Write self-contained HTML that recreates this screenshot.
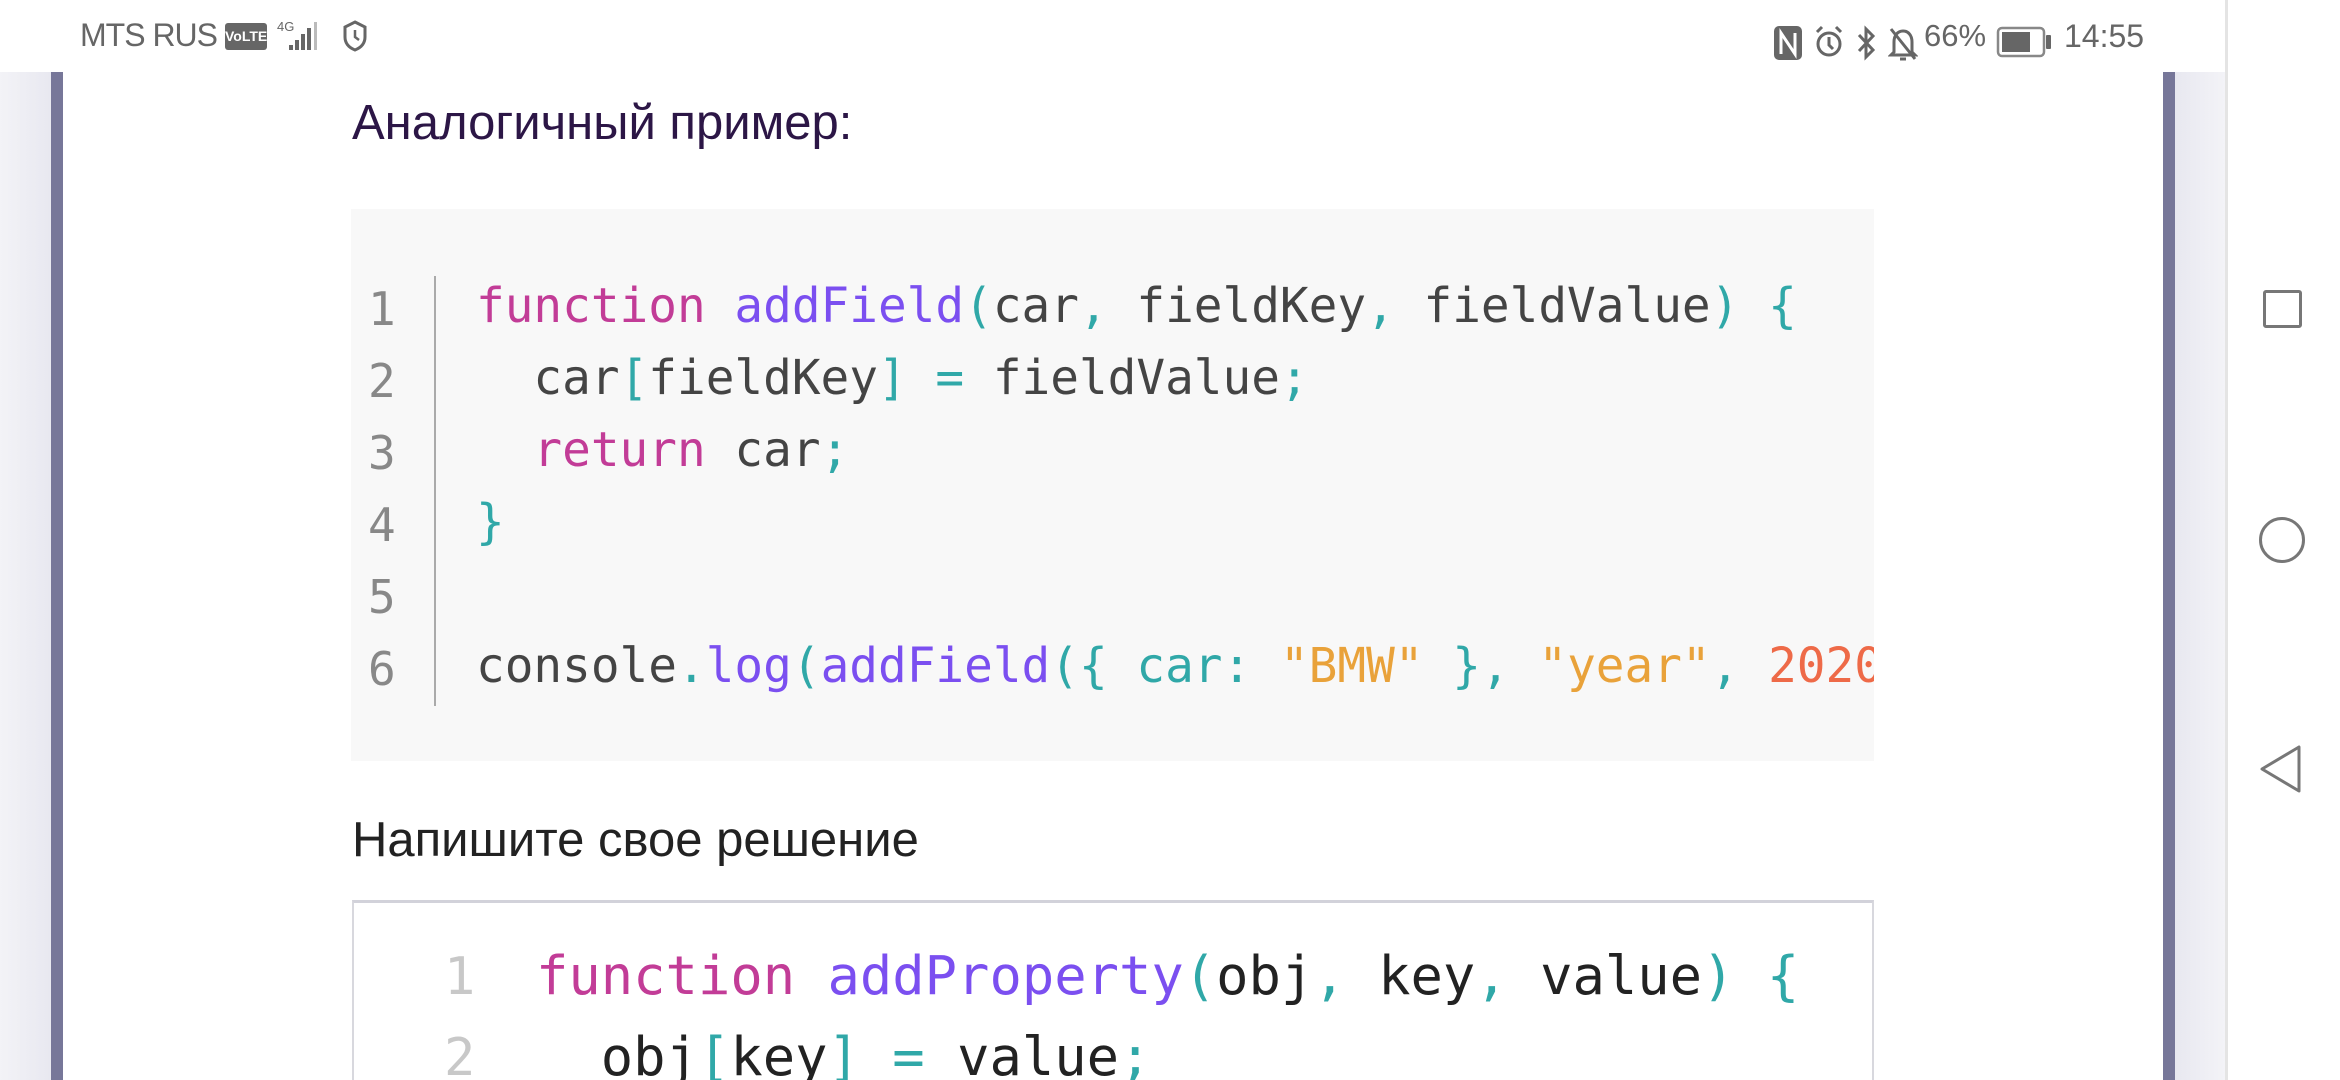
<!DOCTYPE html>
<html style="overflow:hidden;height:1080px"><head><meta charset="utf-8"><style>
*{margin:0;padding:0;box-sizing:border-box}
body{width:2340px;height:1080px;overflow:hidden;background:#fff;position:relative;font-family:"Liberation Sans","Noto Sans CJK SC",sans-serif}
.abs{position:absolute}
.mono{font-family:"DejaVu Sans Mono","Liberation Mono",monospace;white-space:pre}
.k{color:#c23c97}.f{color:#7b4ff0}.p{color:#30a8a8}.s{color:#e9a23a}.n{color:#ee6a48}
</style></head><body>
<div class="abs" style="left:0;top:72px;width:51px;height:1008px;background:linear-gradient(90deg,#f3f3f7,#e8e8f0)"></div>
<div class="abs" style="left:51px;top:72px;width:12px;height:1008px;background:#777799"></div>
<div class="abs" style="left:2163px;top:72px;width:12px;height:1008px;background:#777799"></div>
<div class="abs" style="left:2175px;top:72px;width:50px;height:1008px;background:linear-gradient(90deg,#e8e8f0,#f3f3f7)"></div>
<div class="abs" style="left:2225px;top:0;width:3px;height:1080px;background:#e4e4e4"></div>

<div class="abs" style="left:80px;top:17px;font-size:32px;color:#666;letter-spacing:-1px">MTS RUS</div>
<div class="abs" style="left:225px;top:23px;width:42px;height:27px;background:#666;border-radius:3px;color:#fff;font-size:14px;font-weight:bold;line-height:27px;text-align:center">VoLTE</div>
<svg class="abs" style="left:276px;top:18px" width="54" height="36" viewBox="0 0 54 36"><text x="1" y="13" font-size="13" fill="#666" font-family="Liberation Sans">4G</text><rect x="13" y="27" width="4" height="5" fill="#666"/><rect x="19" y="22" width="4" height="10" fill="#666"/><rect x="25" y="16" width="4" height="16" fill="#666"/><rect x="31" y="10" width="4" height="22" fill="#666"/><rect x="38" y="4" width="3" height="28" fill="#bbb"/></svg>
<svg class="abs" style="left:342px;top:20px" width="26" height="32" viewBox="0 0 26 32"><path d="M13 2 L23 7 V17 C23 24 18 28 13 30 C8 28 3 24 3 17 V7 Z" fill="none" stroke="#666" stroke-width="3"/><path d="M13 10 V17 L17 20" fill="none" stroke="#666" stroke-width="2.5"/></svg>

<svg class="abs" style="left:1772px;top:24px" width="32" height="40" viewBox="0 0 32 40"><rect x="2" y="2" width="28" height="34" rx="5" fill="#666"/><path d="M9 30 V9 L23 30 V9" stroke="#fff" stroke-width="3" fill="none"/></svg>
<svg class="abs" style="left:1814px;top:24px" width="30" height="38" viewBox="0 0 30 38"><circle cx="15" cy="20" r="11" fill="none" stroke="#666" stroke-width="3"/><path d="M15 13 V21 L19 25" stroke="#666" stroke-width="3" fill="none"/><path d="M3 8 L8 3 M27 8 L22 3" stroke="#666" stroke-width="3"/></svg>
<svg class="abs" style="left:1855px;top:24px" width="24" height="40" viewBox="0 0 24 40"><path d="M4 11 L18 26 L11 33 V5 L18 12 L4 27" stroke="#666" stroke-width="3" fill="none"/></svg>
<svg class="abs" style="left:1888px;top:24px" width="30" height="40" viewBox="0 0 30 40"><path d="M6 28 V18 C6 11 10 7 15 7 C20 7 24 11 24 18 V28 L27 31 H3 Z" fill="none" stroke="#666" stroke-width="3"/><path d="M12 35 H18 M3 5 L27 35" stroke="#666" stroke-width="3"/></svg>
<div class="abs" style="left:1924px;top:18px;font-size:31px;color:#666">66%</div>
<svg class="abs" style="left:1996px;top:26px" width="58" height="34" viewBox="0 0 58 34"><rect x="2" y="2" width="46" height="28" rx="4" fill="none" stroke="#888" stroke-width="2.5"/><rect x="6" y="6" width="28" height="20" fill="#666"/><rect x="50" y="9" width="5" height="14" rx="1" fill="#666"/></svg>
<div class="abs" style="left:2064px;top:18px;font-size:32px;color:#666">14:55</div>

<div class="abs" style="left:2263px;top:290px;width:39px;height:38px;border:3px solid #777;border-radius:3px"></div>
<div class="abs" style="left:2259px;top:517px;width:46px;height:46px;border:3px solid #777;border-radius:50%"></div>
<svg class="abs" style="left:2258px;top:744px" width="46" height="50" viewBox="0 0 46 50"><path d="M41 3 V47 L4 25 Z" fill="none" stroke="#777" stroke-width="3" stroke-linejoin="round"/></svg>

<div class="abs" style="left:352px;top:95px;font-size:49px;color:#2c1646">Аналогичный пример:</div>

<div class="abs" style="left:351px;top:209px;width:1523px;height:552px;background:#f8f8f8;overflow:hidden">
  <div class="abs" style="left:83px;top:67px;width:2px;height:430px;background:#aaa"></div>
  <div class="abs mono" style="left:17px;top:64px;font-size:46px;line-height:72px;color:#888">1
2
3
4
5
6</div>
  <div class="abs mono" style="left:125px;top:62px;font-size:47.7px;line-height:72px;color:#444"><span class="k">function</span> <span class="f">addField</span><span class="p">(</span>car<span class="p">,</span> fieldKey<span class="p">,</span> fieldValue<span class="p">)</span> <span class="p">{</span>
  car<span class="p">[</span>fieldKey<span class="p">]</span> <span class="p">=</span> fieldValue<span class="p">;</span>
  <span class="k">return</span> car<span class="p">;</span>
<span class="p">}</span>

console<span class="p">.</span><span class="f">log</span><span class="p">(</span><span class="f">addField</span><span class="p">({</span> <span class="p">car:</span> <span class="s">"BMW"</span> <span class="p">},</span> <span class="s">"year"</span><span class="p">,</span> <span class="n">2020</span><span class="p">));</span></div>
</div>

<div class="abs" style="left:352px;top:812px;font-size:49px;color:#222">Напишите свое решение</div>

<div class="abs" style="left:352px;top:900px;width:1522px;height:180px;border:2px solid #d8d8de;border-bottom:none;border-top:3px solid #d2d2da;overflow:hidden">
  <div class="abs mono" style="left:90px;top:34px;font-size:52px;line-height:81px;color:#c8c8c8">1
2</div>
  <div class="abs mono" style="left:182px;top:32px;font-size:53.8px;line-height:81px;color:#222"><span class="k">function</span> <span class="f">addProperty</span><span class="p">(</span>obj<span class="p">,</span> key<span class="p">,</span> value<span class="p">)</span> <span class="p">{</span>
  obj<span class="p">[</span>key<span class="p">]</span> <span class="p">=</span> value<span class="p">;</span></div>
</div>
</body></html>
